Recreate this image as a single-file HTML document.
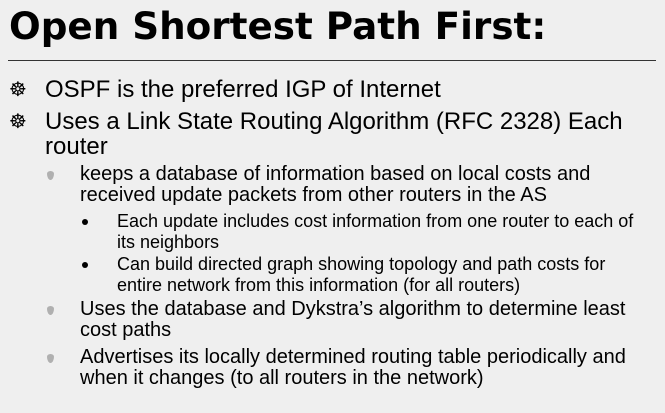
<!DOCTYPE html><html><head><style>
body{margin:0;width:665px;height:413px;background:#efefef;font-family:"Liberation Sans","DejaVu Sans",sans-serif;color:#000;position:relative;overflow:hidden}
.t{position:absolute;left:9px;top:1px;font-family:"DejaVu Sans",sans-serif;font-size:37.3px;font-weight:bold;line-height:50px;white-space:nowrap}
.hr{position:absolute;left:8px;top:60px;width:648px;height:1px;background:#333}
.p{position:absolute;white-space:nowrap}
.l1{left:45px;font-size:24px;line-height:25px}
.l2{left:80px;font-size:20px;line-height:21px}
.l3{left:117px;font-size:18px;line-height:21px}
.b1{position:absolute;left:9px;font-family:"DejaVu Sans",sans-serif;font-size:20px;line-height:20px;font-weight:bold}
.b2{position:absolute;left:47px;width:7px;height:9px;background:#b0b0b0;border-radius:50% 50% 50% 50%/30% 30% 70% 70%}
.b3{position:absolute;left:82px;width:6px;height:6px;background:#000;border-radius:50%}
</style></head><body>
<div class="t">Open Shortest Path First:</div>
<div class="hr"></div>
<div class="b1" style="top:79px">☸</div>
<div class="p l1" style="top:77px">OSPF is the preferred IGP of Internet</div>
<div class="b1" style="top:111px">☸</div>
<div class="p l1" style="top:109px">Uses a Link State Routing Algorithm (RFC 2328) Each<br>router</div>
<div class="b2" style="top:171px"></div>
<div class="p l2" style="top:164px">keeps a database of information based on local costs and<br>received update packets from other routers in the AS</div>
<div class="b3" style="top:219px"></div>
<div class="p l3" style="top:211px">Each update includes cost information from one router to each of<br>its neighbors</div>
<div class="b3" style="top:262px"></div>
<div class="p l3" style="top:254px">Can build directed graph showing topology and path costs for<br>entire network from this information (for all routers)</div>
<div class="b2" style="top:306px"></div>
<div class="p l2" style="top:299px">Uses the database and Dykstra’s algorithm to determine least<br>cost paths</div>
<div class="b2" style="top:354px"></div>
<div class="p l2" style="top:347px">Advertises its locally determined routing table periodically and<br>when it changes (to all routers in the network)</div>
</body></html>
